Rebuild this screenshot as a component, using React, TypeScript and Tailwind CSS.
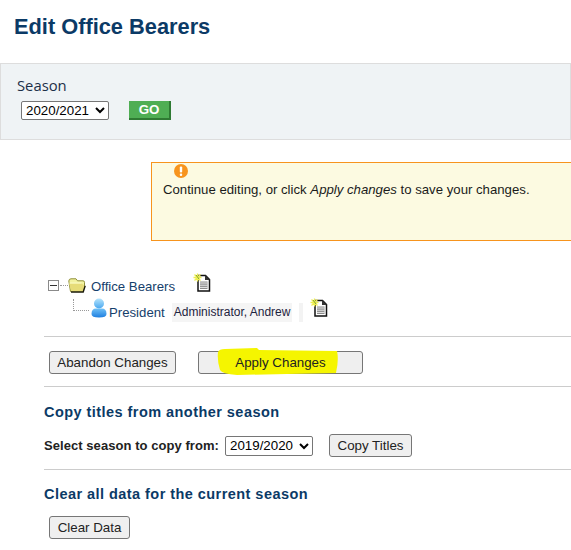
const sans = "font-['Liberation_Sans',Arial,sans-serif]";

function NewDocIcon() {
  return (
    <svg width="18" height="19" viewBox="0 0 18 19" className="block">
      <path d="M5 2.500h7.500L16.500 6.500V18H5z" fill="#fff" stroke="#111" strokeWidth="1.500" />
      <path d="M12 2l5 5h-5z" fill="#333" />
      <rect x="7" y="8.500" width="7.500" height="7.500" fill="#8c8c8c" />
      <path d="M7 10h7.500M7 12.200h7.500M7 14.400h7.500" stroke="#fff" strokeWidth="0.800" />
      <path d="M4.500 0.500v8M0.500 4.500h8M1.500 1.500l6 6M7.500 1.500l-6 6" stroke="#eeee50" strokeWidth="1.300" />
      <path d="M3 2l3 4" stroke="#7fa52e" strokeWidth="1" />
    </svg>
  );
}

function FolderIcon() {
  return (
    <svg width="18" height="15" viewBox="0 0 18 15" className="block">
      <path d="M0.800 3Q1 0.800 3 0.800h5l1.500 2h5.500q1.500 0 1.500 1.500V8L15 13.500H2.500z" fill="#f2f2a0" stroke="#8f8f3a" strokeWidth="1" />
      <path d="M1 5.500h12.500l3.500 2.500-2 6H3.500z" fill="#e6dc78" />
      <path d="M3 14h12.200l2-6.200" fill="none" stroke="#1a1a0a" strokeWidth="1.400" />
      <path d="M1.500 5h12" stroke="#fbfbc8" strokeWidth="1" />
    </svg>
  );
}

function PersonIcon() {
  return (
    <svg width="16" height="20" viewBox="0 0 16 20" className="block">
      <defs>
        <linearGradient id="head" x1="0" y1="0" x2="0" y2="1">
          <stop offset="0" stopColor="#b5e4fc" />
          <stop offset="1" stopColor="#4aa8f0" />
        </linearGradient>
        <linearGradient id="torso" x1="0" y1="0" x2="0" y2="1">
          <stop offset="0" stopColor="#6fc0f6" />
          <stop offset="1" stopColor="#1f7fe0" />
        </linearGradient>
      </defs>
      <circle cx="8" cy="5.500" r="5" fill="url(#head)" />
      <path d="M0.500 16Q0.500 10.500 5 10.500h6q4.500 0 4.500 5.500 0 3.500-7.500 3.500T0.500 16z" fill="url(#torso)" />
    </svg>
  );
}

function CollapseBox() {
  return (
    <span className="flex h-[11px] w-[11px] items-center justify-center border border-[#8a8a8a] bg-white">
      <span className="h-px w-[7px] bg-[#333]" />
    </span>
  );
}

const btn =
  "h-[23px] rounded-[3px] border border-[#767676] bg-[#efefef] text-[13.330px] leading-none text-[#222]";
const heading = "text-[14.500px] font-bold leading-[17px] tracking-[0.45px] text-[#0b3a66]";
const picker =
  "h-[20px] w-[88px] rounded-[2px] border border-[#767676] bg-white text-[13.330px] leading-none text-black";

export default function App() {
  return (
    <div className={`${sans} h-[550px] w-[571px] overflow-hidden bg-white`}>
      <h1 className="pl-[14px] pt-[14px] pb-[1px] text-[21.800px] font-bold leading-[25px] text-[#0b3a66]">
        Edit Office Bearers
      </h1>

      <div className="mt-[23px] h-[77px] border border-[#dddddd] bg-[#eff3f5] pl-[16px] pt-[12px]">
        <div className="font-['Open_Sans',sans-serif] text-[14.800px] leading-[18px] text-[#1c2f48]">Season</div>
        <div className="mt-[7px] flex items-center">
          <select className="ml-[4px] h-[19px] w-[88px] rounded-[2px] border border-[#767676] bg-white text-[13.330px] leading-none text-black">
            <option>2020/2021</option>
          </select>
          <button className="ml-[20px] h-[19px] w-[42px] border-b-2 border-r-2 border-[#2f7a33] bg-[#4fae54] text-[13.330px] font-bold leading-none text-white">
            GO
          </button>
        </div>
      </div>

      <div className="mt-[22px] ml-[151px] h-[79px] w-[440px] border border-[#f7941d] bg-[#fcfae1]">
        <svg width="14" height="14" viewBox="0 0 14 14" className="ml-[22px] mt-px block">
          <circle cx="7" cy="7" r="7" fill="#f7941d" />
          <rect x="5.800" y="2.500" width="2.400" height="6" rx="1" fill="#fff" />
          <rect x="5.800" y="9.500" width="2.400" height="2.400" rx="1" fill="#fff" />
        </svg>
        <p className="pl-[11px] pt-[4px] text-[13.200px] leading-[16px] text-[#1a1a1a]">
          Continue editing, or click <em>Apply changes</em> to save your changes.
        </p>
      </div>

      <div className="ml-[48px] mt-[32px]">
        <div className="flex h-[24px] items-center">
          <CollapseBox />
          <span className="ml-px w-[8px] border-t border-dotted border-[#999]" />
          <FolderIcon />
          <span className="ml-[5px] mt-[3px] text-[13.200px] text-[#15406b]">Office Bearers</span>
          <span className="ml-[18px] -mt-[6px]"><NewDocIcon /></span>
        </div>
        <div className="flex h-[24px] items-center">
          <span className="ml-[25px] mb-[8px] h-[12px] w-[16px] border-b border-l border-dotted border-[#999]" />
          <span className="ml-[2px] -mt-[3px]"><PersonIcon /></span>
          <span className="ml-[2px] mt-[8px] text-[13.200px] text-[#15406b]">President</span>
          <span className="ml-[7px] mt-[7px] bg-[#f5f5f5] px-[2px] text-[12px] leading-[19px] text-[#1d2340]">
            Administrator, Andrew
          </span>
          <span className="ml-[7px] mt-[7px] h-[19px] w-[4px] bg-[#f3f3f3]" />
          <span className="ml-[7px] -mt-[3px]"><NewDocIcon /></span>
        </div>
      </div>

      <div className="ml-[44px] mt-[15px] border-t border-[#cccccc] pl-[5px] pt-[14px]">
        <div className="flex items-center">
          <button className={`${btn} w-[127px]`}>Abandon Changes</button>
          <button className={`${btn} relative ml-[22px] w-[165px]`}>
            <svg width="122" height="28" viewBox="0 0 122 28" className="absolute left-[18px] -top-[4px]">
              <path d="M1 4Q2 1 8 1L40 0 42 2 120 3Q122 12 119 25L70 26 20 27Q5 26 3 22 0 12 1 4z" fill="#f5f500" />
            </svg>
            <span className="relative">Apply Changes</span>
          </button>
        </div>
      </div>

      <div className="ml-[44px] mt-[12px] border-t border-[#cccccc] pt-[17px]">
        <h2 className={heading}>Copy titles from another season</h2>
        <div className="mt-[13px] flex items-center">
          <span className="text-[13px] font-bold tracking-[0.06px] text-[#222]">Select season to copy from:</span>
          <select className={`${picker} ml-[6px]`}>
            <option>2019/2020</option>
          </select>
          <button className={`${btn} ml-[16px] w-[83px]`}>Copy Titles</button>
        </div>
        <div className="mt-[12px] border-t border-[#cccccc] pt-[16px]">
          <h2 className={heading}>Clear all data for the current season</h2>
          <button className={`${btn} ml-[5px] mt-[13px] w-[81px]`}>Clear Data</button>
        </div>
      </div>
    </div>
  );
}
